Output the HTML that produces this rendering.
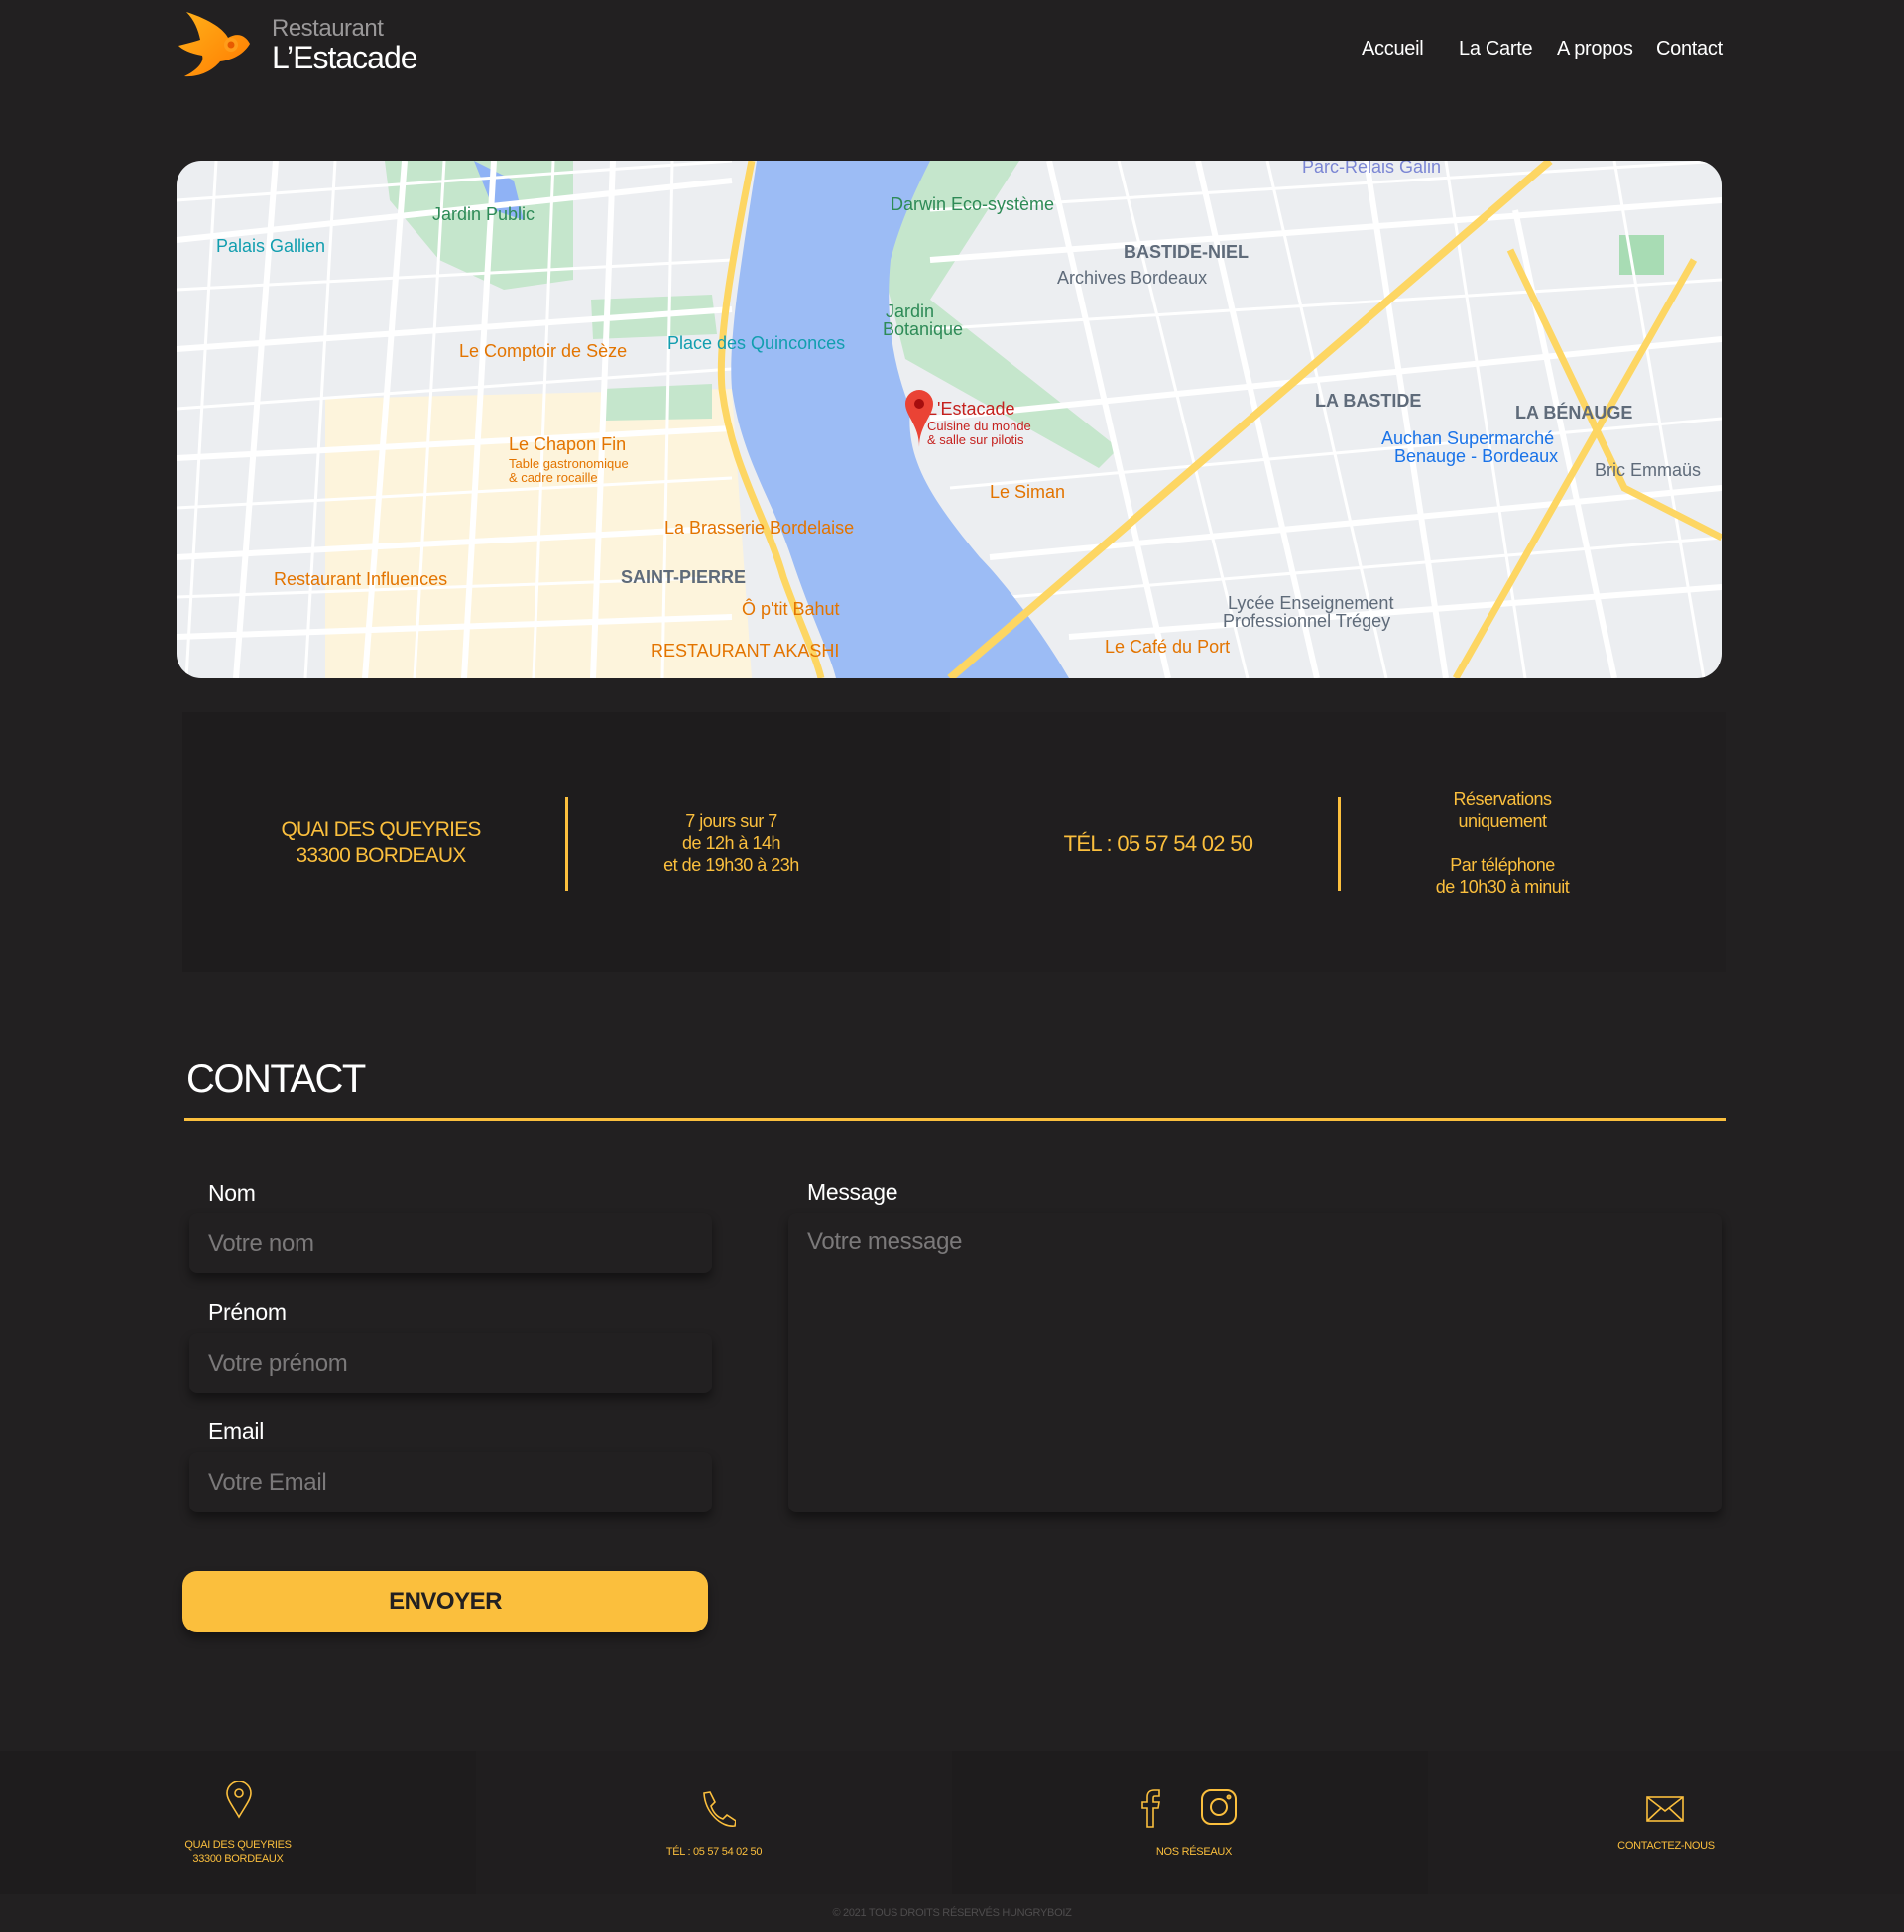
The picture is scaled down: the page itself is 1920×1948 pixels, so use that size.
<!DOCTYPE html>
<html><head><meta charset="utf-8"><style>
*{box-sizing:border-box;margin:0;padding:0}
body{width:1920px;height:1948px;background:#222021;font-family:"Liberation Sans",sans-serif;position:relative;overflow:hidden;color:#fff}
.a{position:absolute}
.nav{top:38px;font-size:20px;color:#fff;letter-spacing:-0.3px}
.y{color:#fbbf3d}
.c{text-align:center}
.inp{background:#222021;border-radius:8px;box-shadow:0 6px 10px rgba(0,0,0,.45);color:#7b797a;font-size:24px;padding-left:19px;letter-spacing:-0.3px}
.lbl{font-size:23px;color:#fff;letter-spacing:-0.3px}
.ft{font-size:11px;color:#fbbf3d;text-align:center;line-height:14px;letter-spacing:-0.3px}
</style></head><body>
<svg class="a" style="left:178px;top:10px" width="76" height="70" viewBox="0 0 76 70">
<defs><linearGradient id="g" x1="0" y1="0" x2="1" y2="1"><stop offset="0" stop-color="#ffb21a"/><stop offset="1" stop-color="#ff7a00"/></linearGradient></defs>
<path d="M10 2 C35 10 48 20 52 28 C62 22 70 26 74 34 C68 44 58 50 44 52 C36 62 22 68 8 67 C22 60 28 52 26 46 C14 44 6 40 2 36 C10 34 18 32 24 30 C22 20 18 10 10 2Z" fill="url(#g)"/>
<circle cx="55" cy="35" r="7" fill="#ff9d1a"/><circle cx="55" cy="35" r="3.5" fill="#e85a00"/>
</svg>
<div class="a" style="left:274px;top:15px;font-size:24px;color:#9a9899;letter-spacing:-0.5px">Restaurant</div>
<div class="a" style="left:274px;top:40px;font-size:32px;color:#fff;letter-spacing:-1px">L’Estacade</div>
<div class="a nav" style="left:1373px">Accueil</div>
<div class="a nav" style="left:1471px">La Carte</div>
<div class="a nav" style="left:1570px">A propos</div>
<div class="a nav" style="left:1670px">Contact</div>

<svg class="a" style="left:178px;top:162px;border-radius:25px" width="1558" height="522" viewBox="0 0 1558 522">
<rect width="1558" height="522" fill="#eceef1"/>
<path d="M150 240 L560 230 L580 522 L150 522Z" fill="#fdf4dc"/>
<path d="M210 0 L400 0 L400 120 L330 130 L265 100 L215 40Z" fill="#c5e6cc"/>
<path d="M300 0 L340 20 L350 60 L320 50Z" fill="#8fb2f5"/>
<path d="M418 140 L540 135 L545 175 L420 180Z M430 230 L540 225 L540 260 L432 262Z" fill="#c5e6cc"/>
<path d="M720 0 L850 0 L760 140 L950 290 L930 310 L735 200 L715 120Z" fill="#c5e6cc"/>
<rect x="1455" y="75" width="45" height="40" fill="#a8dcb4"/>
<g stroke="#fff" stroke-width="3" fill="none">
<path d="M0 40 L560 0 M0 130 L560 100 M0 250 L560 210 M0 350 L560 320 M0 440 L560 420 M40 0 L10 522 M160 0 L130 522 M270 0 L240 522 M380 0 L360 522 M500 0 L490 522"/>
<path d="M760 50 L1558 0 M760 170 L1558 120 M780 330 L1558 260 M840 440 L1558 380 M950 0 L1080 522 M1100 0 L1220 522 M1280 0 L1360 522 M1450 0 L1540 522"/>
</g>
<g stroke="#fff" stroke-width="6" fill="none">
<path d="M0 80 L560 20 M0 190 L560 150 M0 300 L560 270 M0 400 L560 370 M0 480 L560 460 M100 0 L60 522 M230 0 L190 522 M320 0 L290 522 M440 0 L420 522"/>
<path d="M760 100 L1558 40 M760 260 L1558 180 M820 400 L1558 330 M900 480 L1558 430 M880 0 L1000 522 M1030 0 L1150 522 M1200 0 L1280 522 M1350 50 L1450 522"/>
</g>
<path d="M585 0 C570 100 556 180 560 230 C570 300 600 340 620 400 C640 460 660 500 665 522 L900 522 C870 470 830 420 810 400 C760 340 735 300 740 250 C720 200 715 150 720 100 C730 60 750 20 760 0Z" fill="#9cbcf5"/>
<path d="M580 0 C560 100 546 180 550 230 C560 310 595 360 612 420 C630 470 645 500 650 522" stroke="#fdd663" stroke-width="7" fill="none"/>
<path d="M780 522 L1385 0" stroke="#fdd663" stroke-width="8" fill="none"/>
<path d="M1290 522 L1530 100 M1345 90 L1460 330 L1558 380" stroke="#fdd663" stroke-width="7" fill="none"/>
<g font-family="Liberation Sans,sans-serif" font-size="18">
<text x="258" y="60" fill="#2e8b57">Jardin Public</text>
<text x="40" y="92" fill="#129eaf">Palais Gallien</text>
<text x="495" y="190" fill="#129eaf">Place des Quinconces</text>
<text x="285" y="198" fill="#e37400">Le Comptoir de Sèze</text>
<text x="335" y="292" fill="#e37400">Le Chapon Fin</text>
<text x="335" y="310" font-size="13" fill="#e37400">Table gastronomique</text>
<text x="335" y="324" font-size="13" fill="#e37400">&amp; cadre rocaille</text>
<text x="492" y="376" fill="#e37400">La Brasserie Bordelaise</text>
<text x="98" y="428" fill="#e37400">Restaurant Influences</text>
<text x="448" y="426" fill="#5f6b7a" font-weight="bold">SAINT-PIERRE</text>
<text x="570" y="458" fill="#e37400">Ô p'tit Bahut</text>
<text x="478" y="500" fill="#e37400">RESTAURANT AKASHI</text>
<text x="720" y="50" fill="#2e8b57">Darwin Eco-système</text>
<text x="955" y="98" fill="#5f6b7a" font-weight="bold">BASTIDE-NIEL</text>
<text x="888" y="124" fill="#5f6b7a">Archives Bordeaux</text>
<text x="715" y="158" fill="#2e8b57">Jardin</text>
<text x="712" y="176" fill="#2e8b57">Botanique</text>
<text x="757" y="256" fill="#c5221f">L'Estacade</text>
<text x="757" y="272" font-size="13" fill="#c5221f">Cuisine du monde</text>
<text x="757" y="286" font-size="13" fill="#c5221f">&amp; salle sur pilotis</text>
<text x="820" y="340" fill="#e37400">Le Siman</text>
<text x="1148" y="248" fill="#5f6b7a" font-weight="bold">LA BASTIDE</text>
<text x="1350" y="260" fill="#5f6b7a" font-weight="bold">LA BÉNAUGE</text>
<text x="1215" y="286" fill="#1a73e8">Auchan Supermarché</text>
<text x="1228" y="304" fill="#1a73e8">Benauge - Bordeaux</text>
<text x="1430" y="318" fill="#5f6b7a">Bric Emmaüs</text>
<text x="1060" y="452" fill="#5f6b7a">Lycée Enseignement</text>
<text x="1055" y="470" fill="#5f6b7a">Professionnel Trégey</text>
<text x="936" y="496" fill="#e37400">Le Café du Port</text>
<text x="1135" y="12" fill="#7b86d4">Parc-Relais Galin</text>
</g>
<path d="M735 245 a14 14 0 0 1 28 0 c0 12 -14 22 -14 44 c0 -22 -14 -32 -14 -44Z" fill="#ea4335"/>
<circle cx="749" cy="245" r="5" fill="#a50e0e"/>
</svg>

<div class="a" style="left:184px;top:718px;width:774px;height:262px;background:#1e1c1d"></div>
<div class="a" style="left:958px;top:718px;width:782px;height:262px;background:#201e1f"></div>
<div class="a y c" style="left:184px;top:824px;width:400px;font-size:21px;line-height:26px;letter-spacing:-0.8px">QUAI DES QUEYRIES<br>33300 BORDEAUX</div>
<div class="a" style="left:570px;top:804px;width:3px;height:94px;background:#fbbf3d"></div>
<div class="a y c" style="left:580px;top:817px;width:315px;font-size:18px;line-height:22px;letter-spacing:-0.5px">7 jours sur 7<br>de 12h à 14h<br>et de 19h30 à 23h</div>
<div class="a y c" style="left:958px;top:838px;width:420px;font-size:22px;letter-spacing:-0.7px">TÉL : 05 57 54 02 50</div>
<div class="a" style="left:1349px;top:804px;width:3px;height:94px;background:#fbbf3d"></div>
<div class="a y c" style="left:1360px;top:795px;width:310px;font-size:18px;line-height:22px;letter-spacing:-0.5px">Réservations<br>uniquement<br><br>Par téléphone<br>de 10h30 à minuit</div>

<div class="a" style="left:188px;top:1066px;font-size:40px;letter-spacing:-1.5px">CONTACT</div>
<div class="a" style="left:186px;top:1127px;width:1554px;height:3px;background:#fbbf3d"></div>

<div class="a lbl" style="left:210px;top:1190px">Nom</div>
<div class="a inp" style="left:191px;top:1223px;width:527px;height:61px;line-height:61px">Votre nom</div>
<div class="a lbl" style="left:210px;top:1310px">Prénom</div>
<div class="a inp" style="left:191px;top:1344px;width:527px;height:61px;line-height:61px">Votre prénom</div>
<div class="a lbl" style="left:210px;top:1430px">Email</div>
<div class="a inp" style="left:191px;top:1464px;width:527px;height:61px;line-height:61px">Votre Email</div>
<div class="a lbl" style="left:814px;top:1189px">Message</div>
<div class="a inp" style="left:795px;top:1223px;width:941px;height:302px;padding-top:15px">Votre message</div>
<div class="a c" style="left:184px;top:1584px;width:530px;height:62px;line-height:62px;background:#fbbf3d;border-radius:15px;color:#222021;font-size:24px;font-weight:bold;letter-spacing:-0.5px;box-shadow:0 6px 10px rgba(0,0,0,.4)">ENVOYER</div>

<div class="a" style="left:0;top:1765px;width:480px;height:145px;background:#1e1c1d"></div>
<div class="a" style="left:480px;top:1765px;width:480px;height:145px;background:#201e1f"></div>
<div class="a" style="left:960px;top:1765px;width:480px;height:145px;background:#1e1c1d"></div>
<div class="a" style="left:1440px;top:1765px;width:480px;height:145px;background:#201e1f"></div>
<svg class="a" style="left:226px;top:1796px" width="30" height="38" viewBox="0 0 30 38" fill="none" stroke="#fbbf3d" stroke-width="1.6"><path d="M15 36 C8 24 3 18 3 12 a12 12 0 0 1 24 0 c0 6 -5 12 -12 24Z"/><circle cx="15" cy="12" r="4"/></svg>
<div class="a ft" style="left:140px;top:1853px;width:200px">QUAI DES QUEYRIES<br>33300 BORDEAUX</div>
<svg class="a" style="left:704px;top:1805px" width="38" height="38" viewBox="0 0 38 38" fill="none" stroke="#fbbf3d" stroke-width="1.6"><path d="M6 3 l6 -1 l5 10 l-4 4 c2 6 6 11 12 13 l4 -4 l9 6 l-1 5 c-14 2 -30 -14 -31 -33Z"/></svg>
<div class="a ft" style="left:620px;top:1860px;width:200px">TÉL : 05 57 54 02 50</div>
<svg class="a" style="left:1150px;top:1803px" width="22" height="40" viewBox="0 0 22 40" fill="none" stroke="#fbbf3d" stroke-width="1.6"><path d="M7 39 V20 H2 V14 H7 V9 C7 4 10 2 14 2 H19 V8 H15 C13 8 13 9 13 11 V14 H19 L18 20 H13 V39Z"/></svg>
<svg class="a" style="left:1210px;top:1803px" width="38" height="38" viewBox="0 0 38 38" fill="none" stroke="#fbbf3d" stroke-width="2"><rect x="2" y="2" width="34" height="34" rx="9"/><circle cx="19" cy="19" r="8"/><circle cx="29" cy="9" r="1.5"/></svg>
<div class="a ft" style="left:1104px;top:1860px;width:200px">NOS RÉSEAUX</div>
<svg class="a" style="left:1660px;top:1811px" width="38" height="26" viewBox="0 0 38 26" fill="none" stroke="#fbbf3d" stroke-width="1.6"><rect x="1" y="1" width="36" height="24"/><path d="M1 1 L19 15 L37 1 M1 25 L15 12 M37 25 L23 12"/></svg>
<div class="a ft" style="left:1580px;top:1854px;width:200px">CONTACTEZ-NOUS</div>
<div class="a c" style="left:0;top:1923px;width:1920px;font-size:11px;color:#4e4c4d;letter-spacing:-0.3px">© 2021 TOUS DROITS RÉSERVÉS HUNGRYBOIZ</div>
</body></html>
